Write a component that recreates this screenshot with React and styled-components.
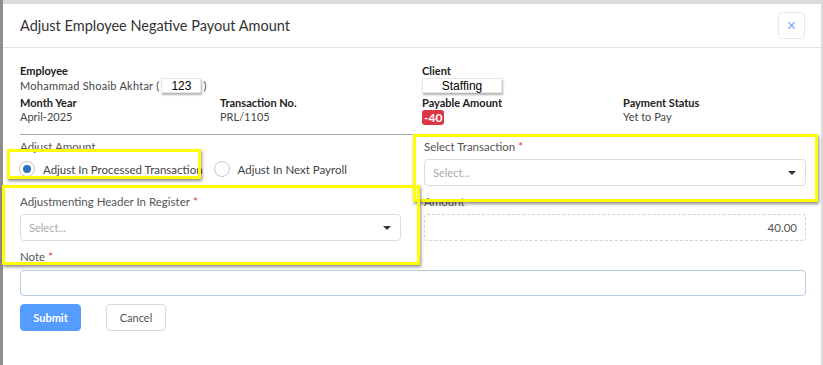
import React from 'react';
import styled, { createGlobalStyle } from 'styled-components';

const GlobalStyle = createGlobalStyle`
  body {
    margin: 0;
    font-family: Lato, "Open Sans", Arial, sans-serif;
    background: #dadada;
  }
`;

const Backdrop = styled.div`
  position: relative;
  height: 365px;
  overflow: hidden;
  box-sizing: border-box;
  padding: 4px 2px 0 3px;
  background: linear-gradient(to right, #8e8e8e 3px, #dcdcdc 3px);
`;

const Modal = styled.div`
  background: #fff;
  height: 361px;
  box-sizing: border-box;
`;

const Header = styled.div`
  display: flex;
  align-items: center;
  justify-content: space-between;
  height: 43px;
  padding: 0 16px 0 17px;
  border-bottom: 1px solid #dee2e6;
`;

const Title = styled.div`
  font-size: 14.5px;
  color: #333;
`;

const CloseBtn = styled.button`
  width: 27px;
  height: 27px;
  padding: 0;
  background: #fff;
  border: 1px solid #e4eaf3;
  border-radius: 4px;
  color: #7ea9ff;
  font-size: 16px;
  line-height: 1;
  font-family: Arial, sans-serif;
`;

const Body = styled.div`
  padding: 16px 15px 0 17px;
`;

const InfoGrid = styled.div`
  display: grid;
  grid-template-columns: 200px 202px 201px 1fr;
  row-gap: 3px;
`;

const Field = styled.div`
  grid-column: ${(p) => (p.$span ? `span ${p.$span}` : 'auto')};
  font-size: 11px;
  line-height: 14px;
`;

const FieldLabel = styled.div`
  font-weight: 700;
  color: #222;
`;

const FieldValue = styled.div`
  color: #444;
  display: flex;
  align-items: center;
  letter-spacing: ${(p) => (p.$wide ? '0.25px' : '0')};
`;

const Chip = styled.span`
  display: inline-block;
  box-sizing: border-box;
  width: ${(p) => p.$w}px;
  height: 15px;
  line-height: 15px;
  background: #fff;
  border: 1px solid #e8e8e8;
  box-shadow: 1px 2px 2px rgba(0, 0, 0, 0.3);
  font-family: "Liberation Sans", Arial, sans-serif;
  font-size: 12px;
  letter-spacing: 0;
  color: #000;
  text-align: center;
  margin: 0 ${(p) => p.$m || 0}px;
`;

const Badge = styled.span`
  display: inline-block;
  background: #dc3545;
  color: #fff;
  font-weight: 700;
  font-size: 12px;
  line-height: 15px;
  padding: 0 2px;
  border-radius: 3px;
`;

const Divider = styled.hr`
  width: 395px;
  margin: 9px 0 4px;
  border: 0;
  border-top: 1px solid #a9a9a9;
`;

const FormGrid = styled.div`
  display: grid;
  grid-template-columns: 381px 382px;
  column-gap: 23px;
  row-gap: 8px;
`;

const Group = styled.div`
  display: flex;
  flex-direction: column;
  grid-column: ${(p) => (p.$full ? '1 / -1' : 'auto')};
`;

const Label = styled.div`
  font-size: 11.5px;
  line-height: 16px;
  color: #555;
  margin-bottom: ${(p) => p.$mb ?? 4}px;
`;

const Req = styled.span`
  color: #e03b3b;
  margin-left: 3px;
`;

const Select = styled.div`
  display: flex;
  align-items: center;
  justify-content: space-between;
  box-sizing: border-box;
  height: 27px;
  padding: 0 9px 0 8px;
  border: 1px solid #dcdcdc;
  border-radius: 4px;
  font-size: 11px;
  color: #aaa;
`;

const Caret = styled.span`
  width: 0;
  height: 0;
  border-left: 4px solid transparent;
  border-right: 4px solid transparent;
  border-top: 4px solid #333;
`;

const Amount = styled.div`
  box-sizing: border-box;
  height: 27px;
  line-height: 25px;
  padding: 0 8px;
  border: 1px dashed #d4d4d4;
  border-radius: 3px;
  font-size: 11.5px;
  color: #555;
  text-align: right;
`;

const RadioRow = styled.div`
  display: flex;
  align-items: center;
  height: 28px;
  margin-left: -1px;
  gap: 11px;
`;

const RadioOption = styled.label`
  display: flex;
  align-items: center;
  gap: 8px;
  font-size: 11.5px;
  color: #444;
  white-space: nowrap;
`;

const RadioCircle = styled.span`
  width: 16px;
  height: 16px;
  box-sizing: border-box;
  border-radius: 50%;
  border: 1px solid #c6c6c6;
  display: flex;
  align-items: center;
  justify-content: center;
  &::after {
    content: '';
    width: 8px;
    height: 8px;
    border-radius: 50%;
    background: ${(p) => (p.$checked ? '#2a72c0' : 'transparent')};
  }
`;

const TextInput = styled.div`
  box-sizing: border-box;
  height: 26px;
  border: 1px solid #b6cde3;
  border-radius: 4px;
`;

const Actions = styled.div`
  display: flex;
  gap: 25px;
  margin-top: 8px;
`;

const Button = styled.button`
  box-sizing: border-box;
  height: 27px;
  width: ${(p) => p.$w}px;
  border-radius: 4px;
  font-family: Lato, sans-serif;
  font-size: 11px;
  border: 1px solid ${(p) => (p.$primary ? '#559cff' : '#dadada')};
  background: ${(p) => (p.$primary ? '#559cff' : '#fff')};
  color: ${(p) => (p.$primary ? '#fff' : '#555')};
  font-weight: ${(p) => (p.$primary ? 700 : 400)};
`;

const Highlight = styled.div`
  position: absolute;
  box-sizing: border-box;
  border: 3px solid #ffff00;
  box-shadow: 1px 2px 3px rgba(0, 0, 0, 0.45);
  pointer-events: none;
`;

const highlights = [
  { left: 7, top: 149, width: 194, height: 30 },
  { left: 413, top: 134, width: 405, height: 68 },
  { left: 2, top: 185, width: 418, height: 80 },
];

export default function App() {
  return (
    <>
      <GlobalStyle />
      <Backdrop>
        <Modal>
          <Header>
            <Title>Adjust Employee Negative Payout Amount</Title>
            <CloseBtn>×</CloseBtn>
          </Header>
          <Body>
            <InfoGrid>
              <Field $span={2}>
                <FieldLabel>Employee</FieldLabel>
                <FieldValue $wide>
                  Mohammad Shoaib Akhtar (<Chip $w={40} $m={2}>123</Chip>)
                </FieldValue>
              </Field>
              <Field $span={2}>
                <FieldLabel>Client</FieldLabel>
                <FieldValue>
                  <Chip $w={80}>Staffing</Chip>
                </FieldValue>
              </Field>
              <Field>
                <FieldLabel>Month Year</FieldLabel>
                <FieldValue>April-2025</FieldValue>
              </Field>
              <Field>
                <FieldLabel>Transaction No.</FieldLabel>
                <FieldValue>PRL/1105</FieldValue>
              </Field>
              <Field>
                <FieldLabel>Payable Amount</FieldLabel>
                <FieldValue>
                  <Badge>-40</Badge>
                </FieldValue>
              </Field>
              <Field>
                <FieldLabel>Payment Status</FieldLabel>
                <FieldValue>Yet to Pay</FieldValue>
              </Field>
            </InfoGrid>

            <Divider />

            <FormGrid>
              <Group>
                <Label $mb={0}>Adjust Amount</Label>
                <RadioRow>
                  <RadioOption>
                    <RadioCircle $checked />
                    Adjust In Processed Transaction
                  </RadioOption>
                  <RadioOption>
                    <RadioCircle />
                    Adjust In Next Payroll
                  </RadioOption>
                </RadioRow>
              </Group>
              <Group>
                <Label>
                  Select Transaction<Req>*</Req>
                </Label>
                <Select>
                  Select...
                  <Caret />
                </Select>
              </Group>
              <Group>
                <Label>
                  Adjustmenting Header In Register<Req>*</Req>
                </Label>
                <Select>
                  Select...
                  <Caret />
                </Select>
              </Group>
              <Group>
                <Label>Amount</Label>
                <Amount>40.00</Amount>
              </Group>
              <Group $full>
                <Label $mb={5}>
                  Note<Req>*</Req>
                </Label>
                <TextInput />
              </Group>
            </FormGrid>

            <Actions>
              <Button $primary $w={61}>Submit</Button>
              <Button $w={60}>Cancel</Button>
            </Actions>
          </Body>
        </Modal>
        {highlights.map((h, i) => (
          <Highlight key={i} style={h} />
        ))}
      </Backdrop>
    </>
  );
}
